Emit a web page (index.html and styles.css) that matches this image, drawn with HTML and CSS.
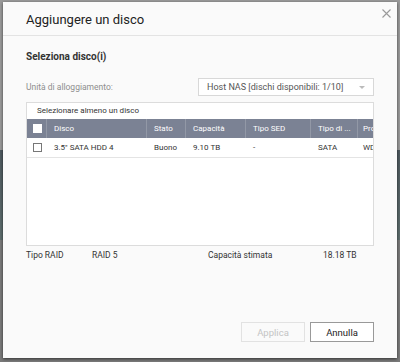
FILE: index.html
```html
<!DOCTYPE html>
<html lang="it">
<head>
    <meta charset="UTF-8">
    <title>Aggiungere un disco</title>
    <link rel="stylesheet" href="styles.css">
</head>
<body>
    <div class="dialog">
        <div class="dialog-header">
            <h1>Aggiungere un disco</h1>
            <span class="close">
                <svg width="9" height="9" viewBox="0 0 9 9"><path d="M0.5 0.5L8.5 8.5M8.5 0.5L0.5 8.5" stroke="#9a9a9a" stroke-width="1.1"/></svg>
            </span>
        </div>
        <div class="dialog-body">
            <h2>Seleziona disco(i)</h2>
            <div class="form-row">
                <label>Unità di alloggiamento:</label>
                <div class="select">
                    <span>Host NAS [dischi disponibili: 1/10]</span>
                    <span class="arrow"></span>
                </div>
            </div>
            <div class="panel">
                <div class="panel-caption">Selezionare almeno un disco</div>
                <div class="grid head">
                    <div class="cell cb"><span class="box white"></span></div>
                    <div class="cell">Disco</div>
                    <div class="cell">Stato</div>
                    <div class="cell">Capacità</div>
                    <div class="cell">Tipo SED</div>
                    <div class="cell">Tipo di ...</div>
                    <div class="cell last">Pro</div>
                </div>
                <div class="grid row">
                    <div class="cell cb"><span class="box"></span></div>
                    <div class="cell">3.5" SATA HDD 4</div>
                    <div class="cell">Buono</div>
                    <div class="cell">9.10 TB</div>
                    <div class="cell">-</div>
                    <div class="cell">SATA</div>
                    <div class="cell last">WD</div>
                </div>
            </div>
            <div class="summary">
                <span class="s-label">Tipo RAID</span>
                <span class="s-value">RAID 5</span>
                <span class="s-label2">Capacità stimata</span>
                <span class="s-value2">18.18 TB</span>
            </div>
            <div class="actions">
                <button class="button disabled">Applica</button>
                <button class="button">Annulla</button>
            </div>
        </div>
    </div>
</body>
</html>
```

FILE: styles.css
```css
html, body {
    margin: 0;
    padding: 0;
}
body {
    font-family: Roboto, "Liberation Sans", Arial, sans-serif;
    background: linear-gradient(to bottom, #9a9a9a 0, #9a9a9a 150px, #4f5a60 150px, #5e6e6e 240px, #7a7a7a 240px);
    width: 400px;
    height: 362px;
    overflow: hidden;
    padding: 2px 3px 0 3px;
    box-sizing: border-box;
}
.dialog {
    width: 394px;
    height: 356px;
    background: #fafafa;
    box-shadow: 0 1px 3px rgba(0, 0, 0, 0.6);
    display: flex;
    flex-direction: column;
}
.dialog-header {
    height: 33px;
    border-bottom: 1px solid #e3e3e3;
    display: flex;
    align-items: center;
    justify-content: space-between;
    padding: 0 6px 0 23px;
}
.dialog-header h1 {
    margin: 0;
    font-size: 13px;
    font-weight: 400;
    color: #222;
    padding-top: 2px;
}
.close {
    display: flex;
    align-self: flex-start;
    margin-top: 7px;
}
.dialog-body {
    flex: 1;
    padding: 0 23px 16px 23px;
    display: flex;
    flex-direction: column;
}
.dialog-body h2 {
    margin: 0;
    font-size: 10px;
    font-weight: 700;
    color: #333;
    height: 12px;
    margin-top: 15px;
}
.form-row {
    display: flex;
    align-items: center;
    justify-content: space-between;
    margin-top: 15px;
}
.form-row label {
    font-size: 8.5px;
    color: #8e8e8e;
}
.select {
    width: 176px;
    height: 18px;
    box-sizing: border-box;
    border: 1px solid #d8d8d8;
    background: #fff;
    display: flex;
    align-items: center;
    justify-content: space-between;
    padding: 0 8px 0 8px;
    font-size: 9px;
    color: #555;
}
.arrow {
    width: 0;
    height: 0;
    border-left: 3px solid transparent;
    border-right: 3px solid transparent;
    border-top: 3px solid #bbb;
}
.panel {
    margin-top: 6px;
    height: 144px;
    box-sizing: border-box;
    border: 1px solid #dcdcdc;
    background: #fff;
    overflow: hidden;
}
.panel-caption {
    height: 16px;
    line-height: 16px;
    font-size: 8px;
    color: #333;
    padding-left: 10px;
}
.grid {
    display: grid;
    grid-template-columns: 20px 100px 39px 60px 65px 47px 16px;
    font-size: 8px;
}
.grid.head {
    height: 19px;
    background: #7b8294;
    color: #fff;
}
.grid.row {
    height: 19px;
    color: #333;
    border-bottom: 1px solid #e4e4e4;
}
.cell {
    display: flex;
    align-items: center;
    padding-left: 7px;
    white-space: nowrap;
    overflow: hidden;
}
.head .cell {
    border-right: 1px solid #9298a6;
}
.cell.last {
    padding-left: 5px;
    border-right: none;
}
.head .cell.last {
    border-right: none;
}
.cell.cb {
    padding-left: 6px;
}
.box {
    width: 7px;
    height: 7px;
    border: 1px solid #777;
    background: #fff;
}
.box.white {
    border-color: #fff;
}
.summary {
    display: flex;
    align-items: center;
    font-size: 8.5px;
    color: #333;
    margin-top: 4px;
    height: 10px;
}
.s-label {
    width: 66px;
}
.s-value {
    width: 116px;
}
.s-label2 {
    width: 115px;
}
.actions {
    margin-top: auto;
    display: flex;
    justify-content: flex-end;
    gap: 5px;
}
.button {
    width: 64px;
    height: 20px;
    font-family: inherit;
    font-size: 9.5px;
    background: #fff;
    border: 1px solid #999;
    color: #222;
    padding: 0;
}
.button.disabled {
    border-color: #e2e2e2;
    color: #c4c4c4;
    background: #fafafa;
}
```
